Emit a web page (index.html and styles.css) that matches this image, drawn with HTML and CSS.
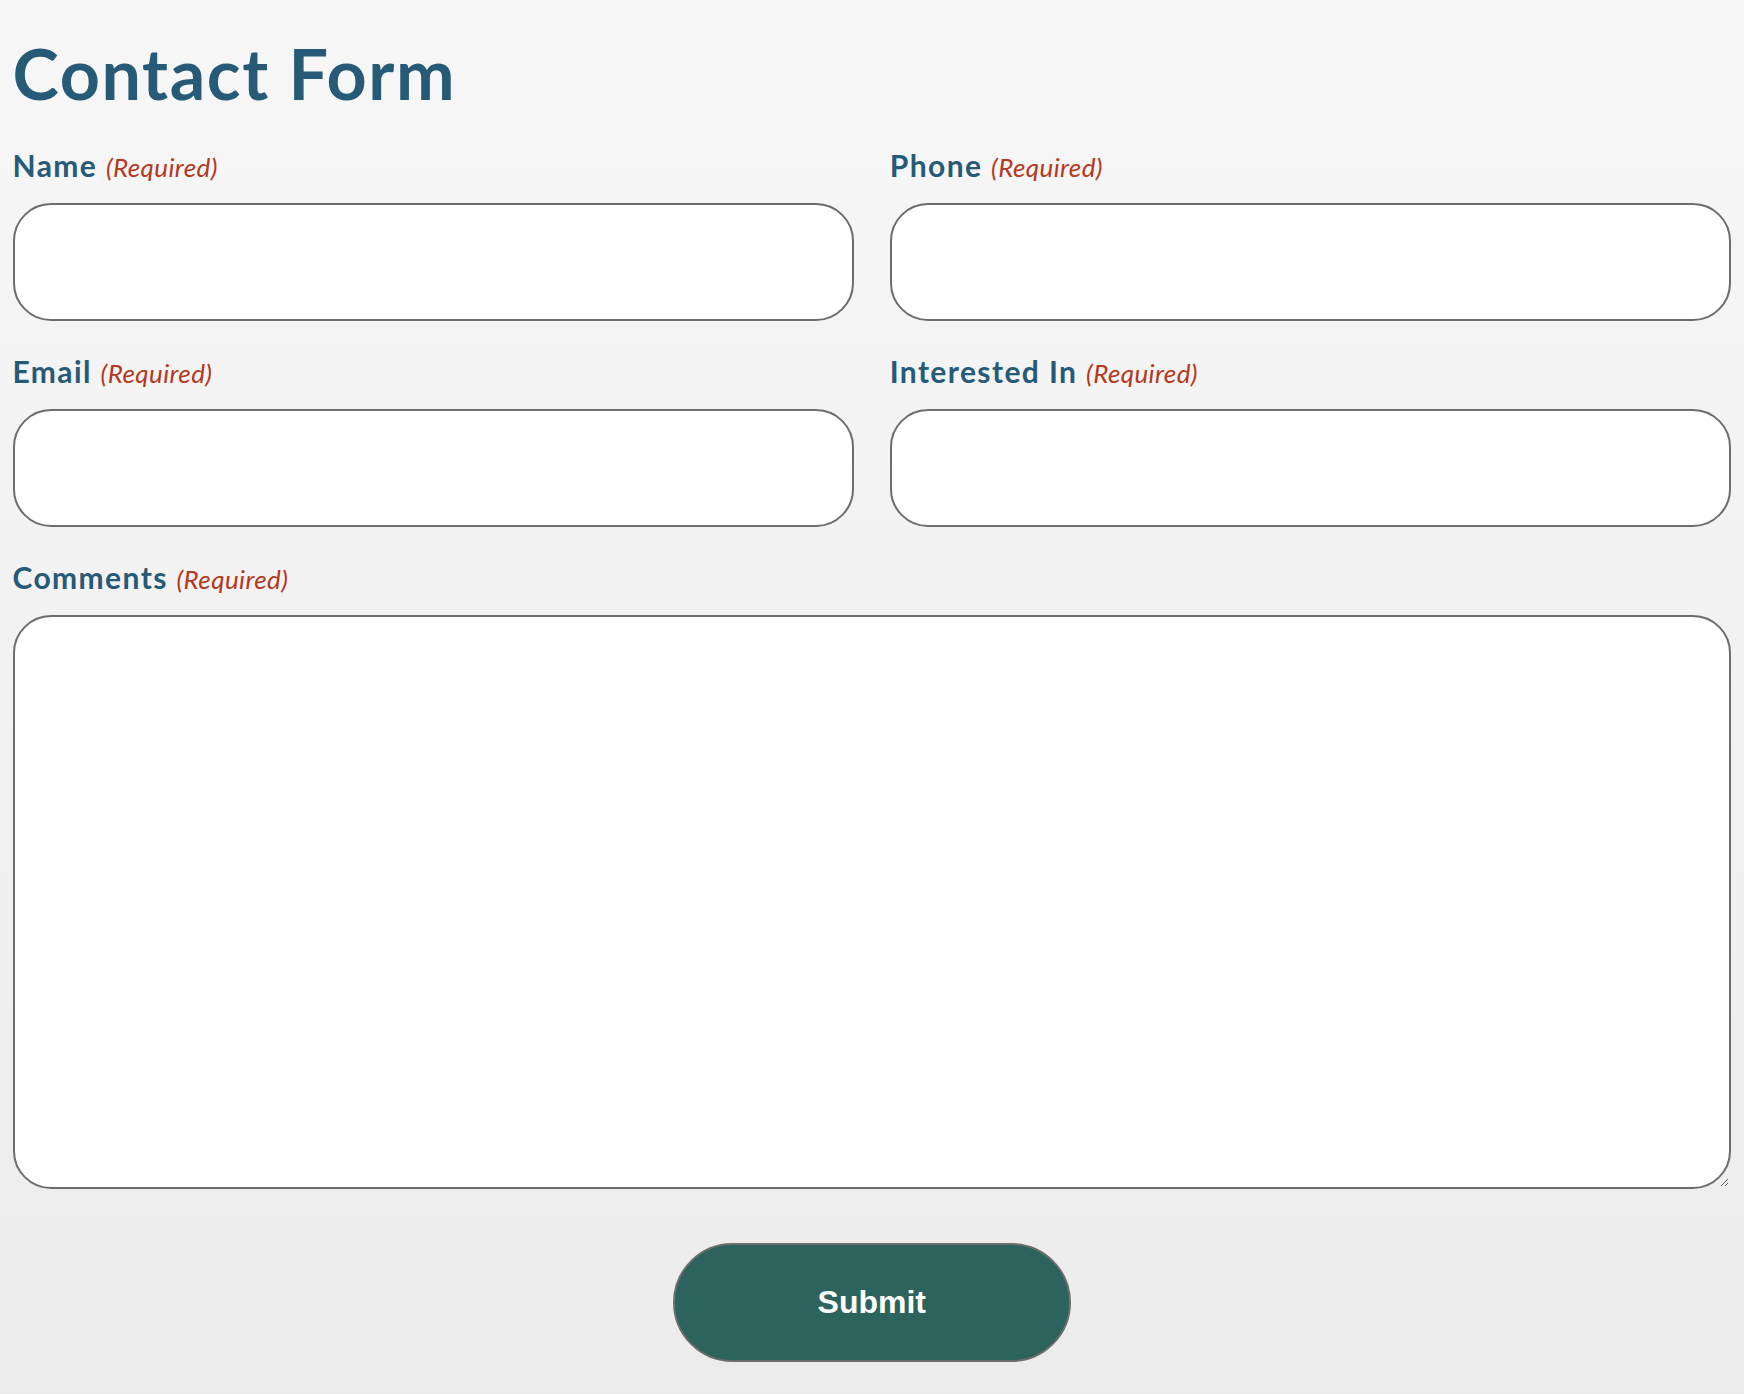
FILE: index.html
```html
<!DOCTYPE html>
<html lang="en">
<head>
<meta charset="utf-8">
<title>Contact Form</title>
<link rel="stylesheet" href="styles.css">
</head>
<body>
<main class="page">
  <h1 class="title">Contact Form</h1>
  <form class="form">
    <div class="grid">
      <div class="field">
        <label class="label" for="name">Name <span class="req">(Required)</span></label>
        <input class="input" id="name" type="text">
      </div>
      <div class="field">
        <label class="label" for="phone">Phone <span class="req">(Required)</span></label>
        <input class="input" id="phone" type="text">
      </div>
      <div class="field">
        <label class="label" for="email">Email <span class="req">(Required)</span></label>
        <input class="input" id="email" type="text">
      </div>
      <div class="field">
        <label class="label" for="interest">Interested In <span class="req">(Required)</span></label>
        <input class="input" id="interest" type="text">
      </div>
      <div class="field field-wide">
        <label class="label" for="comments">Comments <span class="req">(Required)</span></label>
        <textarea class="textarea" id="comments"></textarea>
      </div>
    </div>
    <div class="actions">
      <button class="submit" type="button">Submit</button>
    </div>
  </form>
</main>
</body>
</html>
```

FILE: styles.css
```css
html, body {
  margin: 0;
  padding: 0;
}

body {
  min-height: 1394px;
  background: linear-gradient(to bottom, #f7f7f7 0%, #ececec 100%);
  font-family: Lato, "Noto Sans", sans-serif;
}

.page {
  padding: 38px 13px 32px 12.5px;
}

.title {
  margin: 0;
  font-size: 70px;
  line-height: 70px;
  font-weight: 700;
  color: #265a77;
  letter-spacing: 1.6px;
}

.form {
  margin-top: 40px;
}

.grid {
  display: grid;
  grid-template-columns: 1fr 1fr;
  column-gap: 36px;
  row-gap: 33px;
}

.field {
  display: flex;
  flex-direction: column;
  gap: 21px;
}

.field-wide {
  grid-column: 1 / -1;
}

.label {
  display: block;
  height: 34px;
  font-size: 30px;
  line-height: 34px;
  font-weight: 700;
  color: #265a77;
  letter-spacing: 1.4px;
}

.req {
  margin-left: 0;
  font-size: 26px;
  line-height: 20px;
  font-weight: 400;
  font-style: italic;
  color: #b3391f;
  letter-spacing: 0.4px;
}

.input,
.textarea {
  box-sizing: border-box;
  width: 100%;
  margin: 0;
  border: 2px solid #6d6d6d;
  border-radius: 38px;
  background: #ffffff;
  font-family: Lato, sans-serif;
  font-size: 24px;
  padding: 0 30px;
  outline: none;
}

.input {
  height: 118px;
}

.textarea {
  height: 574px;
  display: block;
  padding: 20px 30px;
  resize: vertical;
}

.actions {
  display: flex;
  justify-content: center;
  margin-top: 54px;
}

.submit {
  box-sizing: border-box;
  width: 398px;
  height: 119px;
  border: 2px solid #6d6d6d;
  border-radius: 60px;
  background: #2c635c;
  color: #ffffff;
  font-family: "Liberation Sans", Arial, sans-serif;
  font-weight: 700;
  font-size: 32px;
  cursor: pointer;
}
```
